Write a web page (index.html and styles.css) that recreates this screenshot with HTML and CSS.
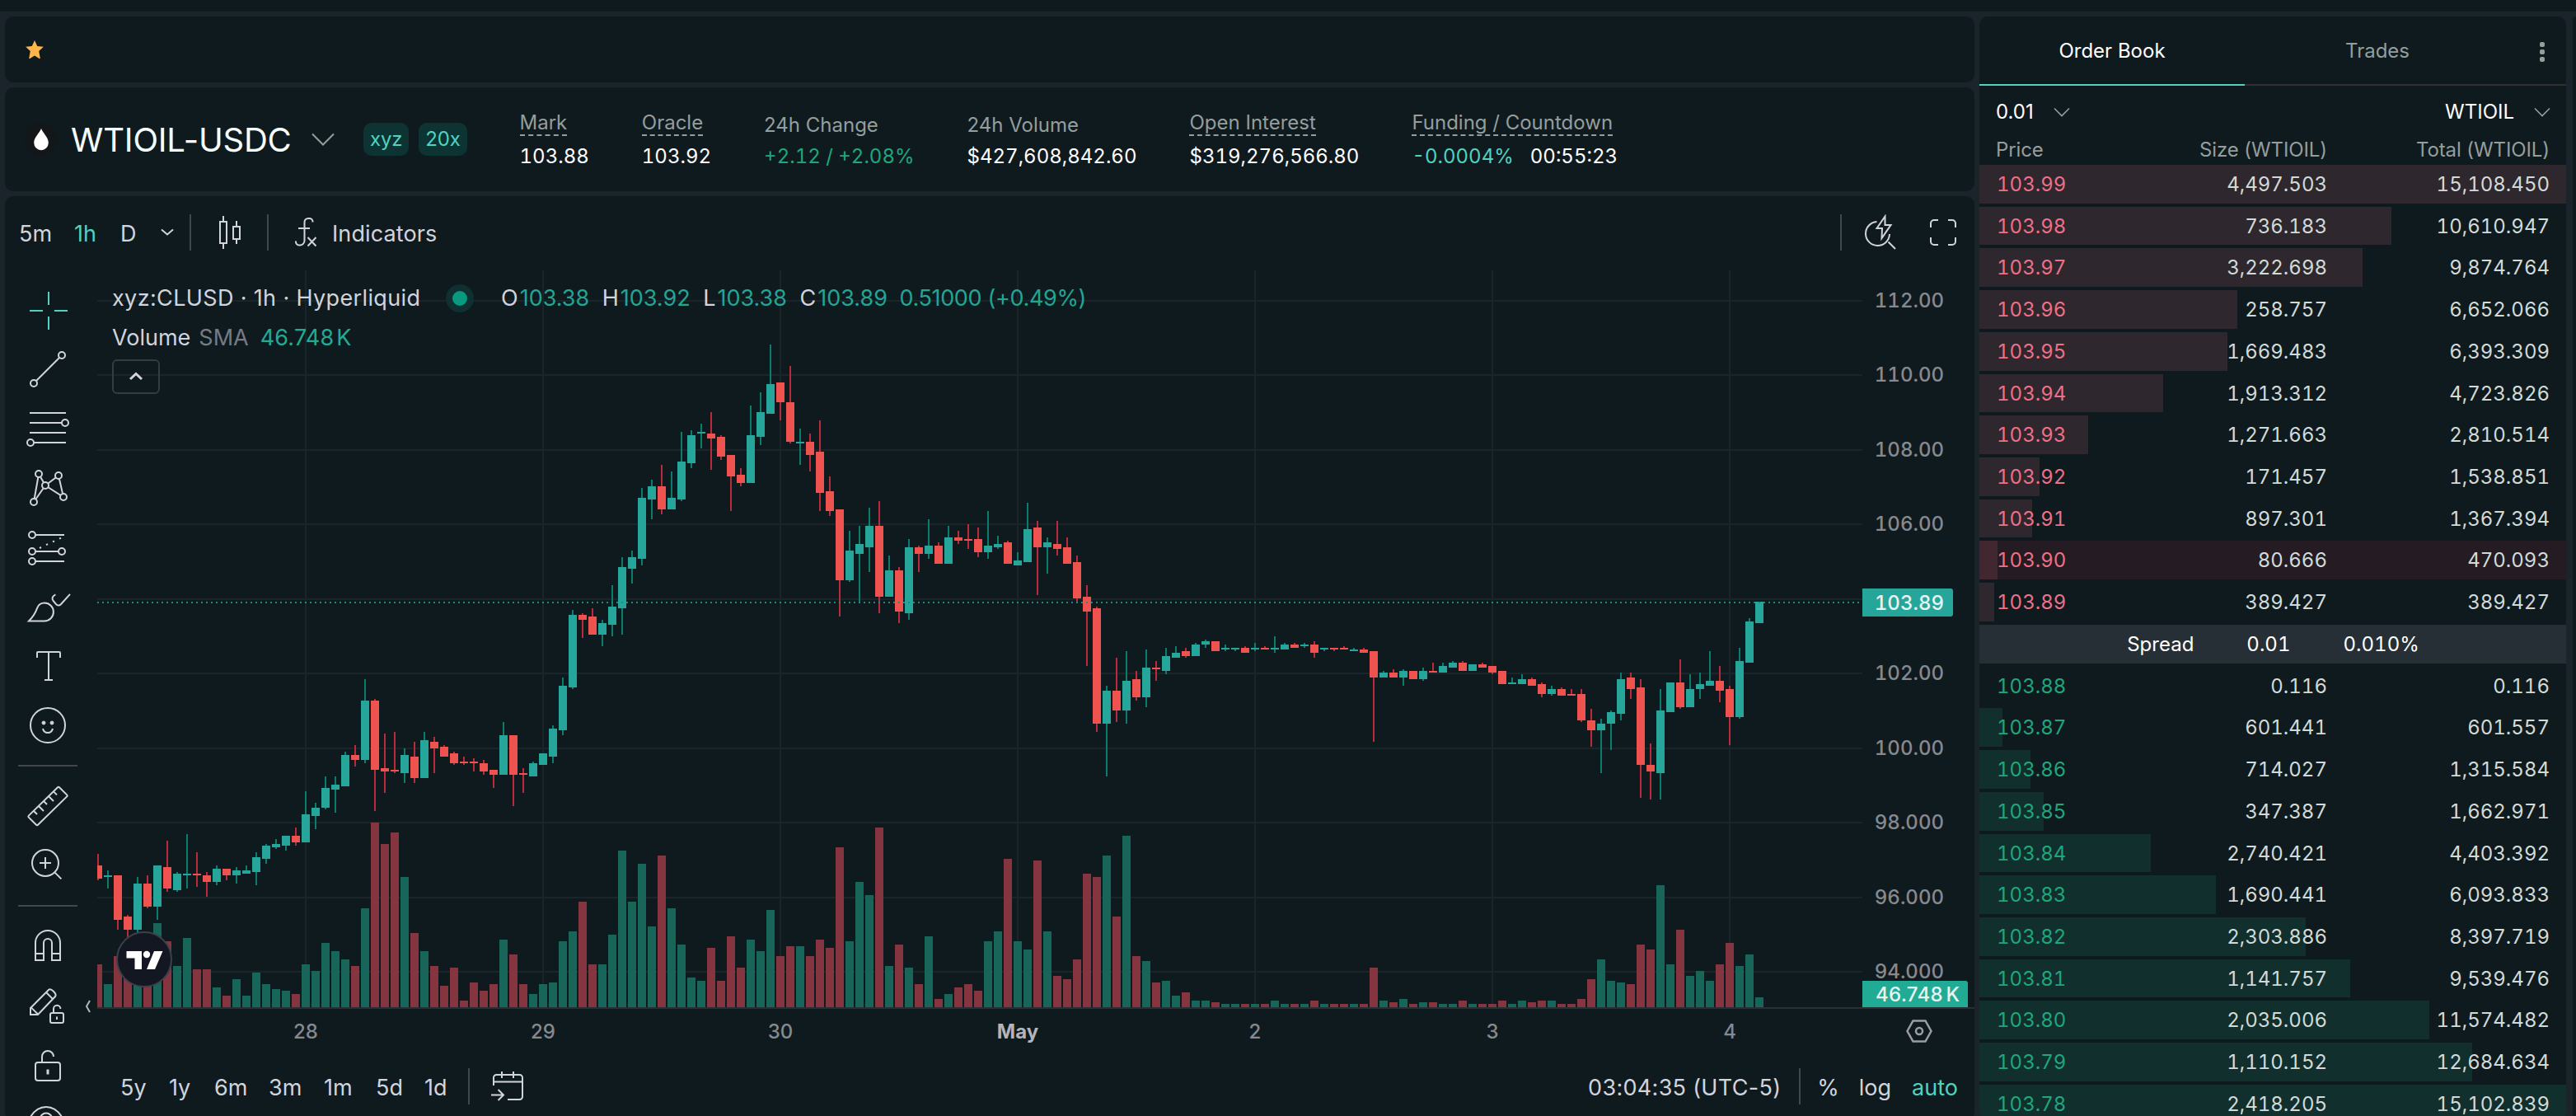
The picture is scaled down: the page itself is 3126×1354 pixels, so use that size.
FILE: index.html
```html
<!DOCTYPE html>
<html lang="en">
<head>
  <meta charset="UTF-8" />
  <title>WTIOIL-USDC</title>
  <link rel="stylesheet" href="styles.css">
</head>
<body>
  <div class="strip"></div>

  <div class="layout">
    <div class="main-col">
      <div class="panel favorites">
        <svg class="star" viewBox="0 0 24 24"><path d="M12 1.8l3 6.5 7 .8-5.2 4.8 1.4 7.6q.1 1.2-1 .7L12 19l-5.2 3.200q-1.100.5-1-.7l1.400-7.600L2 9.100l7-.8z" /></svg>
      </div>

      <div class="panel market">
        <svg class="coin" viewBox="0 0 40 40"><circle cx="20" cy="20" r="20" fill="#14171a" /><path d="M20 7c2 5.500 8.800 10.500 8.800 17.200a8.800 9 0 0 1-17.600 0C11.200 17.500 18 12.500 20 7z" fill="#fff" /></svg>
        <h1>WTIOIL-USDC</h1>
        <svg class="pair-arrow" viewBox="0 0 28 16"><path d="M1 1.500l13 13 13-13" /></svg>
        <span class="badge">xyz</span>
        <span class="badge">20x</span>

        <div class="stats">
          <div class="stat"><label class="hint">Mark</label><span>103.88</span></div>
          <div class="stat"><label class="hint">Oracle</label><span>103.92</span></div>
          <div class="stat"><label>24h Change</label><span class="green">+2.12 / +2.08%</span></div>
          <div class="stat"><label>24h Volume</label><span>$427,608,842.60</span></div>
          <div class="stat"><label class="hint">Open Interest</label><span>$319,276,566.80</span></div>
          <div class="stat"><label class="hint">Funding / Countdown</label><span><span class="teal">-0.0004%</span><span class="timer">00:55:23</span></span></div>
        </div>
      </div>

      <div class="panel chart-panel">
        <div class="toolbar">
          <span class="interval">5m</span>
          <span class="interval active">1h</span>
          <span class="interval last">D</span>
          <svg class="small-arrow" viewBox="0 0 16 10"><path d="M1 1.500l7 6 7-6" /></svg>
          <i class="sep"></i>
          <svg class="tb-icon candles" viewBox="0 0 28 40"><path d="M2 7h8v26H2zM6 0v7M6 33v7M18 13h8v15h-8zM22 6v7M22 28v6" /></svg>
          <i class="sep"></i>
          <svg class="tb-icon fx" viewBox="0 0 28 36"><path d="M22.500 5.500V5a4 4 0 0 0-4-4h-1.500a4.500 4.500 0 0 0-4.500 4.500V28a5.500 5.500 0 0 1-5.500 5.500H6A4 4 0 0 1 2 29v-.5M5 13h14M16.500 24l10 10.500M26.500 24l-10 10.500" /></svg>
          <span class="indicators">Indicators</span>
          <div class="toolbar-right">
            <i class="sep"></i>
            <svg class="tb-icon flash" viewBox="0 0 38 44"><path d="M14.500 9A14.500 14.500 0 1 0 30 24M28.500 33.500L37 42M24.500 2.500L14.500 17h6.500l-.5 12L31.500 13h-7z" /></svg>
            <svg class="tb-icon full" viewBox="0 0 34 34"><path d="M2 11V6a4 4 0 0 1 4-4h5M23 2h5a4 4 0 0 1 4 4v5M32 23v5a4 4 0 0 1-4 4h-5M11 32H6a4 4 0 0 1-4-4v-5" /></svg>
          </div>
        </div>

        <div class="chart-body">
          <div class="tools">
            <svg class="teal-icon" viewBox="0 0 28 28"><path d="M3 14.500h8M18 14.500h8M14.500 3v8M14.500 18v8" /></svg>
            <svg viewBox="0 0 28 28"><path d="M7 21L21 7" /><circle cx="5.500" cy="22.500" r="2" /><circle cx="22.500" cy="5.500" r="2" /></svg>
            <svg viewBox="0 0 28 28"><path d="M3 4.500h22M3 10.500h19.500M3 16.500h22M5.500 22.500H25" /><circle cx="24.500" cy="10.500" r="2" /><circle cx="3.500" cy="22.500" r="2" /></svg>
            <svg viewBox="0 0 28 28"><path d="M8.500 5.500l-3 17 7-10zM12.500 12.500l8-6 3 13z" /><circle cx="8.500" cy="5.500" r="2" /><circle cx="20.500" cy="6.500" r="2" /><circle cx="12.500" cy="12.500" r="2" /><circle cx="5.500" cy="22.500" r="2" /><circle cx="23.500" cy="19.500" r="2" /></svg>
            <svg viewBox="0 0 28 28"><path d="M6.500 6.500H24M6.500 16.500h14M6.500 22.500H24" /><path d="M9 14.500l1-.5M13 12.600l1-.5M17 10.700l1-.5M21 8.800l1-.5" /><circle cx="4.500" cy="6.500" r="2" /><circle cx="4.500" cy="16.500" r="2" /><circle cx="22.500" cy="16.500" r="2" /><circle cx="4.500" cy="22.500" r="2" /></svg>
            <svg viewBox="0 0 28 28"><path d="M2.500 22.700H12a5.400 5.400 0 0 0 0-10.900c-2 0-3.600.9-4.400 3-1 2.700-2.300 5.200-5.100 7.900zM18.700 6.700c-1.800.8-2.500 2.300-1.400 3.800l1.700 2c.9 1 2 1 2.900.1l5.600-6.200" /></svg>
            <svg viewBox="0 0 28 28"><path d="M7.500 9V6q0-.5.500-.5h13q.5 0 .5.500v3M14.500 5.500v17M12 22.500h5" /></svg>
            <svg viewBox="0 0 28 28"><circle cx="14" cy="14" r="10.500" /><path d="M11 16c.4 1.700 1.500 2.500 3 2.500s2.600-.8 3-2.500" /><circle class="fill" cx="11.500" cy="12.500" r="1" /><circle class="fill" cx="16.500" cy="12.500" r="1" /></svg>
            <hr>
            <svg viewBox="0 0 28 28"><path d="M20 2.600q.5-.5 1 0l4.600 4.600q.5.500 0 1L8 25.400q-.5.500-1 0l-4.600-4.600q-.5-.5 0-1zM5.500 17l2 2M8.500 14l3 3M11.500 11l2 2M14.500 8l3 3M17.500 5.200l2 2" /></svg>
            <svg viewBox="0 0 28 28"><circle cx="12.500" cy="12.500" r="8" /><path d="M9 12.500h7M12.500 9v7M18.300 18.300l3.900 3.900" /></svg>
            <hr>
            <svg viewBox="0 0 28 28"><path d="M6.500 22.500V12a7.500 7.500 0 0 1 15 0v10.500h-5V12a2.500 2.500 0 0 0-5 0v10.500zM6.500 18.500h5M16.500 18.500h5" /></svg>
            <svg viewBox="0 0 28 28"><path d="M3.500 15.500L14.600 4.400c1.300-1.100 5 2.400 4 4L8 19.500H3.500zM4 15.300l4.300 4.200M13 6l4.300 4.300M17.500 18.500V16a2.100 2.100 0 0 1 4.200 0M19.500 20.800v1.700" /><rect x="15.500" y="18.500" width="8" height="6" rx="1" /></svg>
            <svg viewBox="0 0 28 28"><rect x="6.500" y="12.500" width="15" height="11" rx="1.500" /><path d="M10.500 12.500V9A3.500 3.500 0 0 1 17.500 9" /><rect class="fill" x="13.500" y="17" width="1" height="2.500" /></svg>
            <svg viewBox="0 0 28 28"><path d="M3.500 9.500C6 5.500 9 3.500 13 3.500s7 2 9.500 6" /><circle cx="13" cy="11" r="3.700" /></svg>
          </div>

          <div class="chart">
            <svg id="chart" viewBox="118 316 2278 960"></svg>
            <div class="legend">
              <div class="legend-row">
                <span class="symbol">xyz:CLUSD · 1h · Hyperliquid</span>
                <i class="live"></i>
                <span class="ohlc">O<b>103.38</b></span>
                <span class="ohlc">H<b>103.92</b></span>
                <span class="ohlc">L<b>103.38</b></span>
                <span class="ohlc">C<b>103.89</b></span>
                <span class="ohlc change"><b>0.51000 (+0.49%)</b></span>
              </div>
              <div class="legend-row vol-row"><span>Volume</span><span class="sma">SMA</span><span class="vol">46.748 K</span></div>
              <div class="collapse"><svg viewBox="0 0 18 12"><path d="M2 9l7-6.500L16 9" /></svg></div>
            </div>
            <svg class="fold" viewBox="0 0 8 16"><path d="M6 1L2 8l4 7" /></svg>
          </div>
        </div>

        <div class="bottom-bar">
          <span class="r5y">5y</span><span class="r1y">1y</span><span class="r6m">6m</span><span class="r3m">3m</span><span class="r1m">1m</span><span class="r5d">5d</span><span class="r1d">1d</span>
          <i class="sep"></i>
          <svg class="calendar" viewBox="0 0 40 40"><path d="M4 19V9.500A3.500 3.500 0 0 1 7.500 6h28A3.500 3.500 0 0 1 39 9.500v23a3.500 3.500 0 0 1-3.500 3.500H21M4 14.500h35M14 2v8M28 2v8M1 30.500h15M9.500 24l6.500 6.500L9.500 37" /></svg>
          <div class="bottom-right">
            <span class="clock">03:04:35 (UTC-5)</span>
            <i class="sep"></i>
            <span class="percent">%</span><span class="log">log</span><span class="teal">auto</span>
          </div>
        </div>
      </div>
    </div>

    <div class="panel book">
      <div class="tabs">
        <div class="tab active">Order Book</div>
        <div class="tab">Trades</div>
        <div class="dots"><i></i><i></i><i></i></div>
      </div>
      <div class="book-select">
        <span>0.01</span>
        <svg viewBox="0 0 20 12"><path d="M1 1.500l9 9 9-9" /></svg>
        <span class="coin-name">WTIOIL</span>
        <svg viewBox="0 0 20 12"><path d="M1 1.500l9 9 9-9" /></svg>
      </div>
      <div class="book-head"><span class="price">Price</span><span>Size (WTIOIL)</span><span>Total (WTIOIL)</span></div>
      <div id="asks"></div>
      <div class="spread"><span>Spread</span><span>0.01</span><span>0.010%</span></div>
      <div id="bids"></div>
    </div>

    <div class="panel side"></div>
  </div>

  <script src="app.js"></script>
</body>
</html>
```

FILE: styles.css
```css
* {
  box-sizing: border-box;
}

body {
  margin: 0;
  height: 1354px;
  overflow: hidden;
  background: #1b242a;
  color: #fff;
  font-family: Inter, "Liberation Sans", sans-serif;
  font-size: 24px;
}

svg {
  display: block;
  fill: none;
  flex: none;
}

.strip {
  height: 14px;
  background: #0f1a1f;
}

.layout {
  display: flex;
  padding: 6px 0 0 6px;
  height: 1346px;
}

.panel {
  background: #0f1a1f;
  border-radius: 10px;
}

.main-col {
  display: flex;
  flex-direction: column;
  gap: 6px;
  width: 2390px;
  margin-right: 6px;
}

.green {
  color: #1fa67d;
}

.teal {
  color: #50d2c1;
}

/* favorites */
.favorites {
  display: flex;
  align-items: center;
  height: 80px;
  flex: none;
  padding-left: 23px;
}

.star {
  width: 26px;
  height: 26px;
  fill: #ffb648;
}

/* market header */
.market {
  display: flex;
  align-items: center;
  height: 126px;
  flex: none;
  padding-left: 24px;
}

.coin {
  width: 40px;
  height: 40px;
}

h1 {
  margin: 0 0 0 16px;
  width: 270px;
  font-size: 40px;
  font-weight: 400;
  letter-spacing: -0.2px;
  color: #f6fefd;
}

.pair-arrow {
  width: 28px;
  height: 16px;
  margin: 0 35px 0 22px;
  stroke: #949e9c;
  stroke-width: 2;
}

.badge {
  height: 40px;
  line-height: 40px;
  padding: 0 8px;
  margin-right: 12px;
  border-radius: 10px;
  background: #0e3333;
  color: #50d2c1;
  letter-spacing: -0.2px;
}

.stats {
  display: flex;
  gap: 64px;
  margin: 2px 0 0 52px;
}

.stat {
  height: 71px;
  display: flex;
  flex-direction: column;
  align-items: flex-start;
  justify-content: space-between;
  line-height: 32px;
  font-variant-numeric: tabular-nums;
}

.stat label {
  color: #949e9c;
  line-height: 34px;
  font-variant-numeric: normal;
}

.stat label.hint {
  line-height: 28px;
  border-bottom: 2px dashed #949e9c;
}

.timer {
  margin-left: 20px;
}

/* chart toolbar */
.chart-panel {
  flex: 1;
  color: #d1d4dc;
  font-size: 27px;
}

.toolbar {
  display: flex;
  align-items: center;
  height: 78px;
  padding: 10px 20px 0 17px;
}

.sep {
  width: 2px;
  height: 44px;
  background: #434651;
}

.interval {
  width: 67px;
  padding-top: 2px;
}

.interval.active {
  width: 56px;
  color: #50d2c1;
}

.interval.last {
  width: 49px;
}

.small-arrow {
  width: 16px;
  height: 10px;
  margin-right: 19px;
  stroke: #d1d4dc;
  stroke-width: 2;
}

.tb-icon {
  stroke: #d1d4dc;
  stroke-width: 2;
}

.candles {
  width: 28px;
  height: 40px;
  margin: 0 31px 0 33px;
}

.fx {
  width: 28px;
  height: 36px;
  margin: 0 18px 0 31px;
}

.indicators {
  padding-top: 2px;
  letter-spacing: 0.1px;
}

.toolbar-right {
  display: flex;
  align-items: center;
  margin-left: auto;
}

.flash {
  width: 38px;
  height: 44px;
  margin: 0 40px 0 28px;
}

.full {
  width: 34px;
  height: 34px;
  margin-right: 1px;
}

/* drawing tools */
.chart-body {
  display: flex;
  height: 960px;
}

.tools {
  width: 112px;
  padding: 24px 0 0 16px;
  display: flex;
  flex-direction: column;
}

.tools svg {
  width: 56px;
  height: 56px;
  margin: 8px 0 8px 8px;
  stroke: #d1d4dc;
  stroke-width: 1;
  overflow: visible;
}

.tools .teal-icon {
  stroke: #50d2c1;
}

.tools circle {
  fill: #0f1a1f;
}

.tools .fill {
  fill: #d1d4dc;
  stroke-width: 0.5;
}

.tools hr {
  width: 72px;
  height: 2px;
  flex: none;
  margin: 12px 0;
  border: none;
  background: #434651;
}

.chart {
  position: relative;
  width: 2278px;
}

#chart {
  width: 2278px;
  height: 960px;
}

#chart text {
  font-size: 24px;
  font-weight: 500;
  fill: #868990;
}

#chart .price {
  font-variant-numeric: tabular-nums;
  text-anchor: end;
}

#chart .time {
  text-anchor: middle;
}

#chart .month {
  font-weight: 700;
  fill: #b2b5be;
}

#chart .tag {
  fill: #e6f5f3;
}

#chart .vol-tag {
  letter-spacing: 0.3px;
  word-spacing: -3px;
}

.grid {
  stroke: #1a2429;
  stroke-width: 2;
}

.axis {
  stroke: #2a2f36;
  stroke-width: 2;
}

.up { fill: #26a69a; }
.down { fill: #ef5350; }
.wick-up { fill: #0a7d6c; }
.wick-down { fill: #b92b3a; }
.vol-up { fill: #18655a; }
.vol-down { fill: #85353f; }

.legend {
  position: absolute;
  left: 18px;
  top: 28px;
}

.legend-row {
  display: flex;
  align-items: center;
  height: 36px;
  line-height: 36px;
}

.symbol {
  width: 387px;
  letter-spacing: 0.36px;
}

.live {
  width: 34px;
  height: 34px;
  margin: 0 33px 0 18px;
  border: 8px solid #0f2f30;
  border-radius: 50%;
  background: #089981;
}

.ohlc {
  margin-right: 15.5px;
}

.ohlc b {
  font-weight: 400;
  margin-left: 2px;
  color: #22a593;
}

.change {
  margin-left: -3px;
  letter-spacing: -0.35px;
}

.vol-row {
  margin-top: 12px;
}

.sma {
  margin: 0 14px 0 10px;
  color: #787b86;
}

.vol {
  color: #22ab94;
  letter-spacing: 0.2px;
  word-spacing: -5px;
}

.collapse {
  display: flex;
  align-items: center;
  justify-content: center;
  width: 58px;
  height: 42px;
  margin-top: 8px;
  border: 2px solid #363a45;
  border-radius: 6px;
}

.collapse svg {
  width: 18px;
  height: 12px;
  stroke: #d1d4dc;
  stroke-width: 3;
}

.fold {
  position: absolute;
  left: -15px;
  top: 897px;
  width: 8px;
  height: 16px;
  stroke: #b2b5be;
  stroke-width: 2;
}

/* range bar */
.bottom-bar {
  display: flex;
  align-items: center;
  height: 84px;
  padding: 0 20px 0 140px;
}

.bottom-bar span {
  padding-top: 3px;
}

.r5y { width: 59px; }
.r1y { width: 55px; }
.r6m { width: 66px; }
.r3m { width: 67px; }
.r1m { width: 63px; }
.r5d { width: 59px; }
.r1d { width: 53px; }

.calendar {
  width: 40px;
  height: 40px;
  margin-left: 25px;
  stroke: #d1d4dc;
  stroke-width: 2;
}

.bottom-right {
  display: flex;
  align-items: center;
  margin-left: auto;
}

.clock {
  margin-right: 22px;
  letter-spacing: 0.3px;
}

.percent {
  margin: 0 24px 0 20px;
}

.log {
  margin-right: 25px;
}

/* order book */
.book {
  width: 712px;
  margin-right: 8px;
  overflow: hidden;
}

.side {
  flex: 1;
  border-radius: 10px 0 0 0;
}

.tabs {
  display: flex;
  height: 84px;
}

.tab {
  width: 322px;
  padding-top: 27px;
  text-align: center;
  color: #949e9c;
  border-bottom: 2px solid #303033;
}

.tab.active {
  color: #fff;
  border-color: #50d2c1;
}

.dots {
  flex: 1;
  display: flex;
  flex-direction: column;
  align-items: center;
  gap: 3px;
  padding: 31px 0 0 10px;
  border-bottom: 2px solid #303033;
}

.dots i {
  width: 6px;
  height: 6px;
  border-radius: 2px;
  background: #949e9c;
}

.book-select {
  display: flex;
  align-items: center;
  height: 62px;
  padding: 1px 19px 0 20px;
}

.book-select svg {
  width: 20px;
  height: 12px;
  margin-left: 24px;
  stroke: #949e9c;
  stroke-width: 1.6;
}

.coin-name {
  margin-left: auto;
}

.book-head,
.row {
  display: grid;
  grid-template-columns: 150px 252px 1fr;
  padding: 0 20px;
  text-align: right;
}

.book-head .price,
.row .price {
  text-align: left;
}

.row .price {
  padding-left: 1px;
}

.book-head {
  height: 34px;
  line-height: 32px;
  letter-spacing: -0.1px;
  color: #949e9c;
}

.row {
  position: relative;
  height: 46.73px;
  line-height: 47px;
  margin-bottom: 4px;
  color: #d2dad7;
  font-variant-numeric: tabular-nums;
}

.row span {
  position: relative;
}

.bar {
  position: absolute;
  left: 0;
  top: 0;
  bottom: 0;
}

#asks .bar { background: rgba(237, 112, 136, 0.15); }
#bids .bar { background: rgba(31, 166, 125, 0.15); }
#asks .price { color: #ed7088; }
#bids .price { color: #1fa67d; }

.row.flash-row {
  background: #241c22;
}

.spread {
  display: flex;
  justify-content: center;
  gap: 64px;
  height: 46.73px;
  line-height: 47px;
  margin-bottom: 4px;
  padding-left: 1px;
  background: #272f36;
  font-variant-numeric: tabular-nums;
}
```

FILE: app.js
```js
const asks = [
  ['103.99', '4,497.503', '15,108.450'],
  ['103.98', '736.183', '10,610.947'],
  ['103.97', '3,222.698', '9,874.764'],
  ['103.96', '258.757', '6,652.066'],
  ['103.95', '1,669.483', '6,393.309'],
  ['103.94', '1,913.312', '4,723.826'],
  ['103.93', '1,271.663', '2,810.514'],
  ['103.92', '171.457', '1,538.851'],
  ['103.91', '897.301', '1,367.394'],
  ['103.90', '80.666', '470.093', true],
  ['103.89', '389.427', '389.427']
];

const bids = [
  ['103.88', '0.116', '0.116'],
  ['103.87', '601.441', '601.557'],
  ['103.86', '714.027', '1,315.584'],
  ['103.85', '347.387', '1,662.971'],
  ['103.84', '2,740.421', '4,403.392'],
  ['103.83', '1,690.441', '6,093.833'],
  ['103.82', '2,303.886', '8,397.719'],
  ['103.81', '1,141.757', '9,539.476'],
  ['103.80', '2,035.006', '11,574.482'],
  ['103.79', '1,110.152', '12,684.634'],
  ['103.78', '2,418.205', '15,102.839']
];

function renderBook(id, rows) {
  const num = s => parseFloat(s.replace(',', ''));
  const max = Math.max(...rows.map(r => num(r[2])));
  document.getElementById(id).innerHTML = rows.map(([price, size, total, flash]) => `
    <div class="row${flash ? ' flash-row' : ''}">
      <div class="bar" style="width: ${(num(total) / max * 100).toFixed(2)}%"></div>
      <span class="price">${price}</span><span>${size}</span><span>${total}</span>
    </div>`).join('');
}

renderBook('asks', asks);
renderBook('bids', bids);

// one candle per hour: direction, wick top, body top, body bottom, wick bottom, volume top
const candles = [
  ['r',1036,1050,1066,1068,1170],['g',1056,1062,1064,1078,1194],['r',1062,1062,1116,1128,1160],['r',1110,1112,1128,1140,1170],
  ['g',1064,1072,1128,1132,1170],['r',1062,1072,1100,1102,1170],['g',1050,1050,1100,1116,1120],['r',1020,1052,1078,1082,1142],
  ['g',1058,1060,1080,1082,1172],['g',1012,1060,1062,1078,1138],['r',1034,1060,1062,1076,1176],['r',1058,1062,1070,1088,1176],
  ['g',1050,1054,1070,1074,1198],['r',1054,1054,1062,1068,1208],['g',1052,1056,1062,1072,1188],['g',1050,1056,1060,1060,1208],
  ['g',1034,1040,1058,1074,1180],['g',1024,1026,1042,1048,1194],['g',1018,1024,1028,1030,1200],['g',1014,1014,1026,1032,1202],
  ['r',1004,1014,1022,1026,1206],['g',960,988,1022,1022,1170],['g',974,980,990,1006,1178],['g',942,956,980,982,1144],
  ['g',942,952,958,986,1154],['g',912,916,954,954,1164],['r',904,916,922,930,1172],['g',824,850,922,926,1102],
  ['r',848,850,934,984,998],['r',890,932,936,962,1024],['r',888,934,936,938,1010],['g',908,916,938,950,1064],
  ['r',900,918,944,950,1132],['g',888,898,944,944,1154],['r',894,900,908,938,1172],['r',904,906,918,918,1196],
  ['r',912,914,926,928,1174],['r',918,924,926,928,1214],['r',920,924,926,936,1192],['r',922,926,936,940,1202],
  ['r',934,934,940,956,1194],['g',876,892,940,940,1140],['r',892,892,940,978,1158],['r',932,938,940,962,1194],
  ['g',924,926,942,942,1206],['g',914,914,928,928,1194],['g',880,884,918,926,1192],['g',822,832,886,892,1142],
  ['g',740,746,834,836,1130],['r',744,746,752,774,1094],['r',738,748,770,770,1170],['g',752,756,770,784,1170],
  ['g',710,736,758,772,1134],['g',676,688,738,770,1032],['g',668,676,690,708,1094],['g',592,604,678,686,1048],
  ['g',582,590,606,630,1124],['r',564,590,618,624,1038],['g',572,604,618,618,1102],['g',524,560,606,608,1146],
  ['g',522,528,562,568,1186],['g',514,524,526,544,1190],['r',500,526,532,570,1150],['r',528,530,554,558,1190],
  ['r',552,552,578,620,1136],['r',568,576,586,590,1174],['g',492,528,586,586,1140],['g',476,500,530,540,1154],
  ['g',418,466,502,502,1104],['r',464,464,488,510,1160],['r',444,488,536,538,1148],['g',520,536,538,564,1148],
  ['r',526,536,552,572,1160],['r',510,548,598,620,1140],['r',578,596,620,626,1150],['r',618,618,704,748,1028],
  ['g',644,668,704,706,1142],['g',638,660,672,732,1070],['g',616,638,664,694,1086],['r',608,638,724,744,1004],
  ['g',674,692,724,724,1172],['r',688,692,742,756,1146],['g',654,664,744,752,1174],['r',662,664,672,694,1194],
  ['g',630,662,672,678,1136],['r',658,662,684,684,1212],['g',638,652,684,684,1206],['r',644,652,656,660,1198],
  ['r',636,654,656,666,1194],['r',640,654,670,676,1202],['g',620,662,670,678,1142],['g',650,660,664,666,1130],
  ['r',656,658,684,684,1042],['g',670,680,686,686,1142],['g',610,642,682,682,1152],['r',632,640,664,722,1044],
  ['g',652,658,664,696,1130],['r',632,660,666,674,1184],['r',652,664,684,684,1188],['r',674,682,726,730,1164],
  ['r',710,724,742,808,1060],['r',736,738,878,888,1064],['g',832,838,878,942,1038],['r',798,838,862,876,1112],
  ['g',790,826,862,878,1014],['r',814,824,846,850,1160],['g',788,810,846,858,1166],['r',802,810,812,826,1192],
  ['g',786,796,814,818,1190],['g',784,792,798,798,1208],['r',786,790,796,798,1204],['g',780,782,796,796,1214],
  ['g',776,778,782,786,1214],['r',778,778,790,790,1216],['g',782,786,788,790,1218],['g',786,786,788,790,1218],
  ['r',784,786,792,792,1218],['g',780,786,788,790,1218],['r',784,786,788,788,1218],['g',772,786,788,792,1214],
  ['g',780,782,788,788,1218],['r',780,782,786,786,1218],['g',780,782,784,786,1218],['r',778,782,792,798,1214],
  ['g',786,786,788,790,1218],['r',786,786,788,790,1218],['r',784,786,788,788,1218],['g',786,788,790,790,1218],
  ['r',786,788,792,792,1218],['r',790,790,822,900,1174],['g',814,816,822,822,1214],['r',812,816,822,822,1216],
  ['g',812,814,822,832,1212],['r',814,814,824,824,1218],['g',810,814,824,826,1216],['r',804,814,816,816,1216],
  ['g',804,808,816,816,1218],['g',802,804,810,810,1218],['r',802,804,814,814,1214],['g',806,806,814,814,1218],
  ['r',804,806,810,810,1218],['r',808,808,816,818,1218],['r',814,814,830,830,1214],['g',822,828,830,830,1218],
  ['g',818,824,830,830,1214],['r',822,824,832,832,1216],['r',828,830,842,846,1214],['g',832,836,842,844,1214],
  ['r',834,836,844,844,1218],['r',836,842,844,844,1218],['r',836,842,874,876,1212],['r',860,874,886,906,1188],
  ['g',872,878,886,938,1164],['g',862,864,878,910,1190],['g',816,824,866,874,1192],['r',816,822,836,848,1194],
  ['r',824,834,928,968,1146],['r',902,928,936,970,1152],['g',836,862,938,970,1074],['g',828,828,864,864,1170],
  ['r',800,828,858,860,1128],['g',818,836,858,858,1184],['g',816,830,836,848,1178],['g',790,826,832,832,1190],
  ['r',808,826,838,852,1170],['r',832,836,870,904,1144],['g',786,802,870,872,1172],['g',750,754,804,804,1158],
  ['g',730,730,756,756,1210]
];

function renderChart() {
  const left = 118, right = 2260, bottom = 1222;
  const priceY = p => Math.round(365 + (112 - p) * 45.22);
  let out = '';

  const days = [[371, '28'], [659, '29'], [947, '30'], [1235, 'May'], [1523, '2'], [1811, '3'], [2099, '4']];
  days.forEach(([x, label]) => {
    out += `<line class="grid" x1="${x}" x2="${x}" y1="328" y2="${bottom}" />`;
    out += `<text class="time${label === 'May' ? ' month' : ''}" x="${x}" y="1260">${label}</text>`;
  });
  for (let p = 112; p >= 94; p -= 2) {
    const y = priceY(p);
    out += `<line class="grid" x1="${left}" x2="${right}" y1="${y}" y2="${y}" />`;
    if (p !== 104) out += `<text class="price" x="2359" y="${y + 8}">${p.toFixed(p < 100 ? 3 : 2)}</text>`;
  }

  let bars = '', sticks = '';
  candles.forEach(([dir, high, top, base, low, vol], i) => {
    const x = 119 + i * 12;
    const side = dir === 'g' ? 'up' : 'down';
    bars += `<rect class="vol-${side}" x="${x - 5}" y="${vol}" width="10" height="${bottom - vol}" />`;
    sticks += `<rect class="wick-${side}" x="${x - 1}" y="${high}" width="2" height="${low - high}" />`;
    sticks += `<rect class="${side}" x="${x - 5}" y="${top}" width="10" height="${base - top}" />`;
  });
  out += `<clipPath id="plot"><rect x="${left}" y="328" width="${right - left}" height="900" /></clipPath>`;
  out += `<g clip-path="url(#plot)">${bars}${sticks}</g>`;
  out += `<line class="axis" x1="${left}" x2="2396" y1="1223" y2="1223" />`;
  out += `<line x1="${left}" x2="${right}" y1="731" y2="731" stroke="#1f8a80" stroke-width="2" stroke-dasharray="2 4" />`;

  out += `<path d="M2260 714h107q3 0 3 3v28q0 3-3 3h-107z" fill="#26a69a" /><text class="price tag" x="2359" y="740">103.89</text>`;
  out += `<path d="M2260 1190h125q3 0 3 3v29h-128z" fill="#22ab94" /><text class="tag vol-tag" x="2276" y="1215">46.748 K</text>`;

  // scale settings
  out += `<path d="M2314.500 1251l7-12.500h15l7 12.500-7 12.500h-15z" stroke="#9a9da6" stroke-width="2.500" /><circle cx="2329" cy="1251" r="4" stroke="#9a9da6" stroke-width="2.500" />`;
  // logo
  out += `<circle cx="175" cy="1164" r="33" fill="#131722" stroke="#3c404b" stroke-width="2" />`;
  out += `<path d="M153.500 1154h18.500v22h-8.500v-13.500h-10zM187 1154h10.500l-9.500 22h-10z" fill="#fff" /><circle cx="178" cy="1158" r="4.200" fill="#fff" />`;

  document.getElementById('chart').innerHTML = out;
}

renderChart();
```
